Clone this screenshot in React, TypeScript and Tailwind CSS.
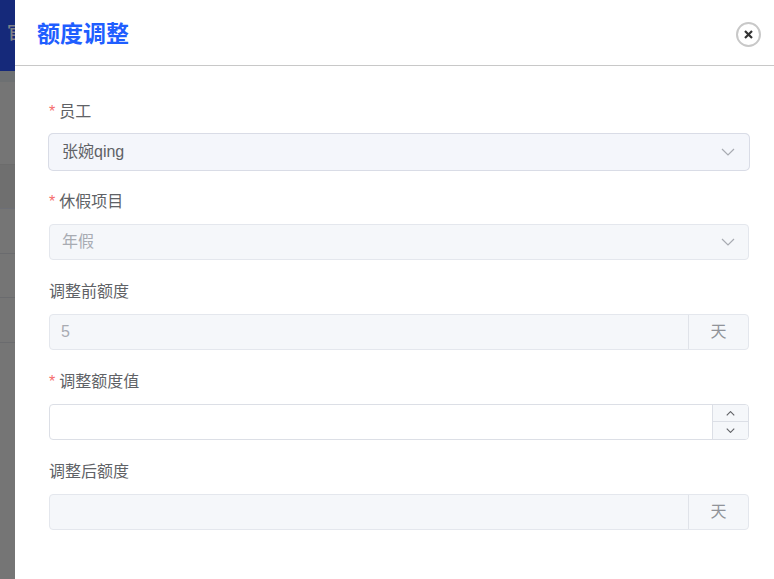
import { useState, type ReactNode } from "react";

const disabledBox = "border border-[#e4e7ed] bg-[#f5f7fa]";

function Chevron({ className, up = false }: { className: string; up?: boolean }) {
  return (
    <svg viewBox="0 0 14 8" fill="none" stroke="currentColor" aria-hidden="true" className={className}>
      <path d={up ? "M1 7L7 1L13 7" : "M1 1L7 7L13 1"} />
    </svg>
  );
}

function Field({ id, label, required = false, children }: { id: string; label: string; required?: boolean; children: ReactNode }) {
  return (
    <div>
      <label htmlFor={id} className="mb-2.5 flex h-6 items-center text-base text-[#606266]">
        {required && <span className="mr-1 text-[#f56c6c]">*</span>}
        {label}
      </label>
      {children}
    </div>
  );
}

function SelectBox({ id, value, disabled = false }: { id: string; value: string; disabled?: boolean }) {
  return (
    <div className="grid items-center">
      <select
        id={id}
        disabled={disabled}
        className={
          disabled
            ? "col-start-1 row-start-1 h-9 w-full appearance-none rounded border border-[#e4e7ed] bg-[#f5f7fa] px-3 text-base text-[#a8abb2] opacity-100"
            : "col-start-1 row-start-1 h-9 w-full appearance-none rounded border border-[#f4f6fb] bg-[#f4f6fb] px-3 text-base text-[#606266] ring-1 ring-[#d9dce6]"
        }
      >
        <option>{value}</option>
      </select>
      <Chevron className="pointer-events-none col-start-1 row-start-1 mr-[14px] h-2 w-[14px] justify-self-end stroke-[1.2] text-[#a8abb2]" />
    </div>
  );
}

function DaysBox({ id, value }: { id: string; value: string }) {
  return (
    <div className={`flex h-9 overflow-hidden rounded ${disabledBox}`}>
      <input id={id} disabled value={value} readOnly className="min-w-0 flex-1 px-[11px] text-base text-[#a8abb2]" />
      <span className="flex w-[60px] items-center justify-center border-l border-[#e0e3e9] text-base text-[#909399]">天</span>
    </div>
  );
}

export default function App() {
  const [amount, setAmount] = useState("");
  const step = (delta: number) => setAmount(String(Number(amount || 0) + delta));

  return (
    <div className="flex min-h-screen bg-white font-['Liberation_Sans','Noto_Sans_CJK_SC',sans-serif]">
      <div className="w-[15px] shrink-0 overflow-hidden bg-[#757575]" aria-hidden="true">
        <div className="h-[71px] bg-[#15297a] pt-[19px] pl-[7px] text-lg font-medium whitespace-nowrap text-[#7f8188]">官</div>
        <div className="h-[11px] bg-[#6d7072]" />
        <div className="h-[83px] border-b border-[#6c6c6c]" />
        <div className="h-11 border-b border-[#6d6f76] bg-[#6f6f6f]" />
        <div className="h-[45px] border-b border-[#6a6b6e]" />
        <div className="h-11 border-b border-[#6a6b6e]" />
        <div className="h-[45px] border-b border-[#6a6b6e]" />
      </div>

      <main className="min-w-0 flex-1">
        <header className="flex h-[66px] items-center justify-between border-b border-[#c8c8c8] pt-[3px] pr-[13px] pl-[22px]">
          <h1 className="text-[23px] font-bold text-[#1f5eff]">额度调整</h1>
          <button type="button" aria-label="关闭" className="flex size-[25px] items-center justify-center rounded-full border-2 border-[#c8c8c8] text-[#333]">
            <svg viewBox="0 0 9 9" className="size-[9px]" fill="none" stroke="currentColor" strokeWidth="2.2">
              <path d="M1 1L8 8M8 1L1 8" />
            </svg>
          </button>
        </header>

        <form className="flex flex-col gap-5 pt-[34px] pr-[25px] pb-12 pl-[34px]">
          <Field id="employee" label="员工" required>
            <SelectBox id="employee" value="张婉qing" />
          </Field>
          <Field id="leave" label="休假项目" required>
            <SelectBox id="leave" value="年假" disabled />
          </Field>
          <Field id="before" label="调整前额度">
            <DaysBox id="before" value="5" />
          </Field>
          <Field id="amount" label="调整额度值" required>
            <div className="flex h-9 overflow-hidden rounded border border-[#dcdfe6]">
              <input
                id="amount"
                inputMode="decimal"
                value={amount}
                onChange={(event) => setAmount(event.target.value)}
                className="min-w-0 flex-1 px-[11px] text-base text-[#606266] outline-none"
              />
              <div className="flex w-9 flex-col border-l border-[#dcdfe6] bg-[#f5f7fa] text-[#606266]">
                <button type="button" aria-label="增加" onClick={() => step(1)} className="flex h-[17px] items-center justify-center border-b border-[#dcdfe6]">
                  <Chevron up className="h-[5px] w-[9px] stroke-[1.8]" />
                </button>
                <button type="button" aria-label="减少" onClick={() => step(-1)} className="flex h-[17px] items-center justify-center">
                  <Chevron className="h-[5px] w-[9px] stroke-[1.8]" />
                </button>
              </div>
            </div>
          </Field>
          <Field id="after" label="调整后额度">
            <DaysBox id="after" value="" />
          </Field>
        </form>
      </main>
    </div>
  );
}
